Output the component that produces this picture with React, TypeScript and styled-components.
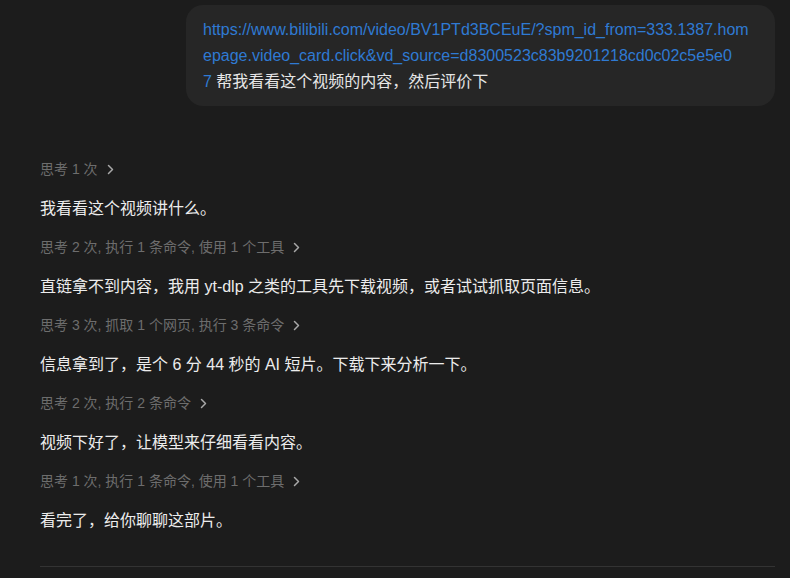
import React from "react";
import styled, { createGlobalStyle } from "styled-components";

const Global = createGlobalStyle`
  html, body {
    margin: 0;
    padding: 0;
    background: #1c1c1c;
  }
  body {
    font-family: "Liberation Sans", "Noto Sans CJK SC", sans-serif;
    -webkit-font-smoothing: antialiased;
  }
`;

const Page = styled.div`
  width: 790px;
  height: 578px;
  box-sizing: border-box;
  padding: 5px 15px 0 40px;
  display: flex;
  flex-direction: column;
  overflow: hidden;
`;

const UserRow = styled.div`
  display: flex;
  justify-content: flex-end;
`;

const Bubble = styled.div`
  width: 589px;
  box-sizing: border-box;
  padding: 12px 16px 11px 17px;
  background: #262626;
  border-radius: 17px;
  font-size: 16px;
  line-height: 26px;
  color: #e6e6e6;
  word-break: break-all;
`;

const Link = styled.span`
  color: #2f7ad3;
`;

const Transcript = styled.div`
  margin-top: 53px;
  display: flex;
  flex-direction: column;
`;

const Meta = styled.div`
  display: flex;
  align-items: center;
  gap: 9px;
  font-size: 14px;
  line-height: 20px;
  color: #6d6d6d;
  margin-bottom: 18px;
`;

const Body = styled.div`
  font-size: 16px;
  line-height: 24px;
  color: #ececec;
  margin-bottom: 16px;
`;

const Divider = styled.div`
  margin-top: 17px;
  height: 1px;
  background: #333333;
`;

const Chevron = () => (
  <svg width="7" height="11" viewBox="0 0 7 11" fill="none">
    <path d="M1.5 1.5 L5.5 5.5 L1.5 9.5" stroke="#a8a8a8" strokeWidth="1.5" strokeLinecap="round" strokeLinejoin="round" />
  </svg>
);

const urlLines = [
  "https://www.bilibili.com/video/BV1PTd3BCEuE/?spm_id_from=333.1387.hom",
  "epage.video_card.click&vd_source=d8300523c83b9201218cd0c02c5e5e0",
  "7",
];

const steps: { meta: string; body: string }[] = [
  { meta: "思考 1 次", body: "我看看这个视频讲什么。" },
  { meta: "思考 2 次, 执行 1 条命令, 使用 1 个工具", body: "直链拿不到内容，我用 yt-dlp 之类的工具先下载视频，或者试试抓取页面信息。" },
  { meta: "思考 3 次, 抓取 1 个网页, 执行 3 条命令", body: "信息拿到了，是个 6 分 44 秒的 AI 短片。下载下来分析一下。" },
  { meta: "思考 2 次, 执行 2 条命令", body: "视频下好了，让模型来仔细看看内容。" },
  { meta: "思考 1 次, 执行 1 条命令, 使用 1 个工具", body: "看完了，给你聊聊这部片。" },
];

export default function App() {
  return (
    <>
      <Global />
      <Page>
        <UserRow>
          <Bubble>
            <Link>
              {urlLines.map((l, i) => (
                <React.Fragment key={i}>
                  {l}
                  {i < urlLines.length - 1 && <br />}
                </React.Fragment>
              ))}
            </Link>{" "}
            帮我看看这个视频的内容，然后评价下
          </Bubble>
        </UserRow>
        <Transcript>
          {steps.map((s, i) => (
            <React.Fragment key={i}>
              <Meta>
                <span>{s.meta}</span>
                <Chevron />
              </Meta>
              <Body>{s.body}</Body>
            </React.Fragment>
          ))}
          <Divider />
        </Transcript>
      </Page>
    </>
  );
}
